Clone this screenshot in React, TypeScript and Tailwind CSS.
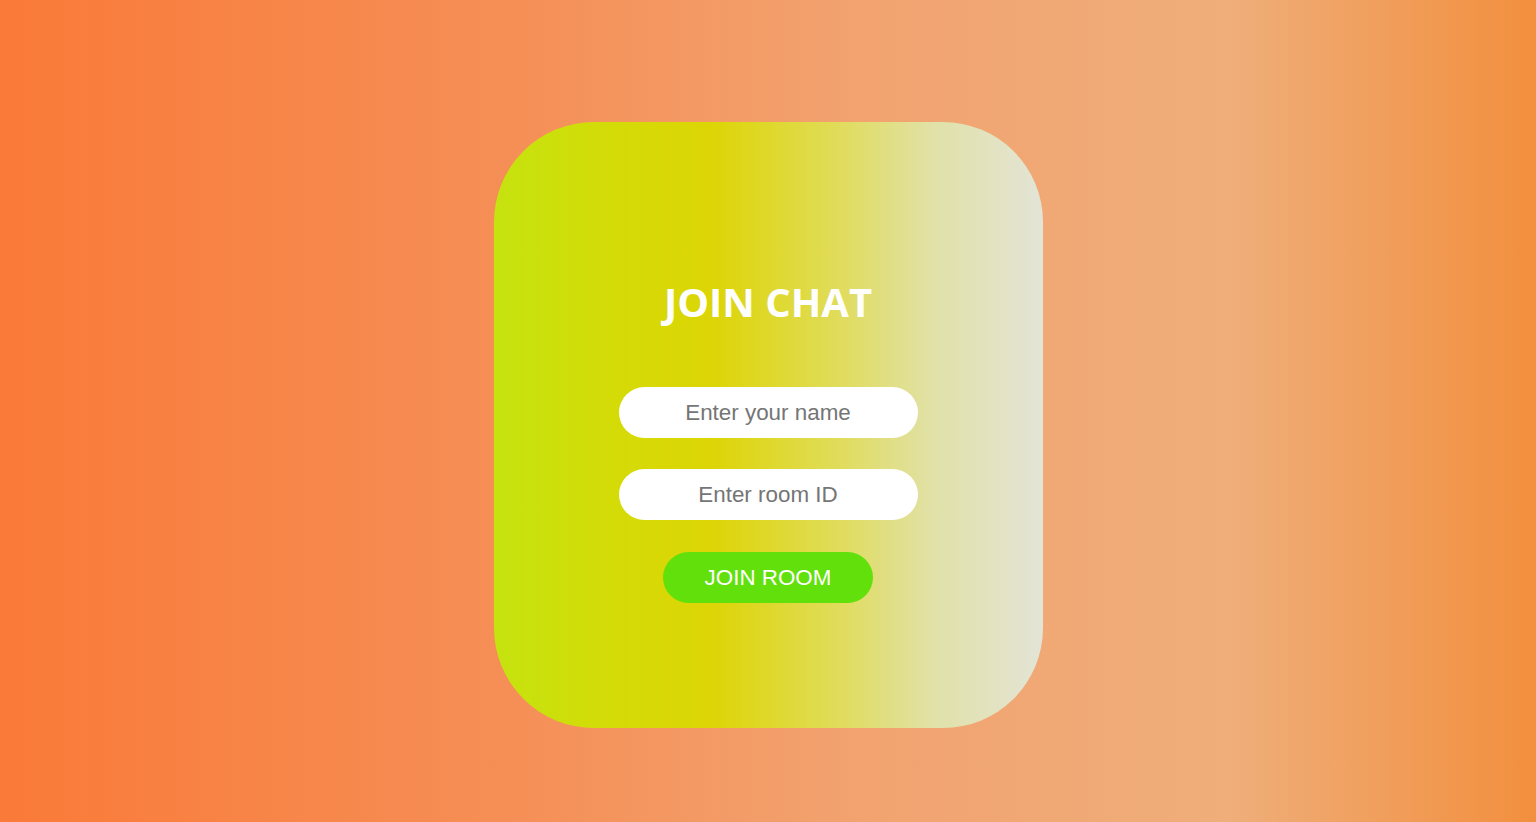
import { useState } from "react";

export default function App() {
  const [name, setName] = useState("");
  const [room, setRoom] = useState("");

  return (
    <div className="min-h-screen w-full flex items-center justify-center pt-[28px] bg-[linear-gradient(to_right,#fa7a38_0%,#f59058_35%,#f2a26f_55%,#efae7a_80%,#f28f3e_100%)]">
      <div className="w-[549px] h-[606px] rounded-[100px] flex flex-col items-center pt-[156px] bg-[linear-gradient(to_right,#c5e30f_0%,#d6da06_25%,#ddd506_40%,#e0dc58_62%,#e1e1a8_80%,#e3e4d6_100%)]">
        <h1 className="text-white text-[40px] leading-[48px] font-bold font-['Open_Sans',sans-serif]">
          JOIN CHAT
        </h1>
        <input
          value={name}
          onChange={(e) => setName(e.target.value)}
          placeholder="Enter your name"
          className="mt-[61px] w-[299px] h-[51px] rounded-full bg-white text-center text-[22.4px] text-gray-800 outline-none font-['Liberation_Sans',Arial,sans-serif] placeholder:text-[#757575]"
        />
        <input
          value={room}
          onChange={(e) => setRoom(e.target.value)}
          placeholder="Enter room ID"
          className="mt-[31px] w-[299px] h-[51px] rounded-full bg-white text-center text-[22.4px] text-gray-800 outline-none font-['Liberation_Sans',Arial,sans-serif] placeholder:text-[#757575]"
        />
        <button className="mt-[32px] w-[210px] h-[51px] rounded-full bg-[#62e00c] text-white text-[22.4px] font-['Liberation_Sans',Arial,sans-serif]">
          JOIN ROOM
        </button>
      </div>
    </div>
  );
}
